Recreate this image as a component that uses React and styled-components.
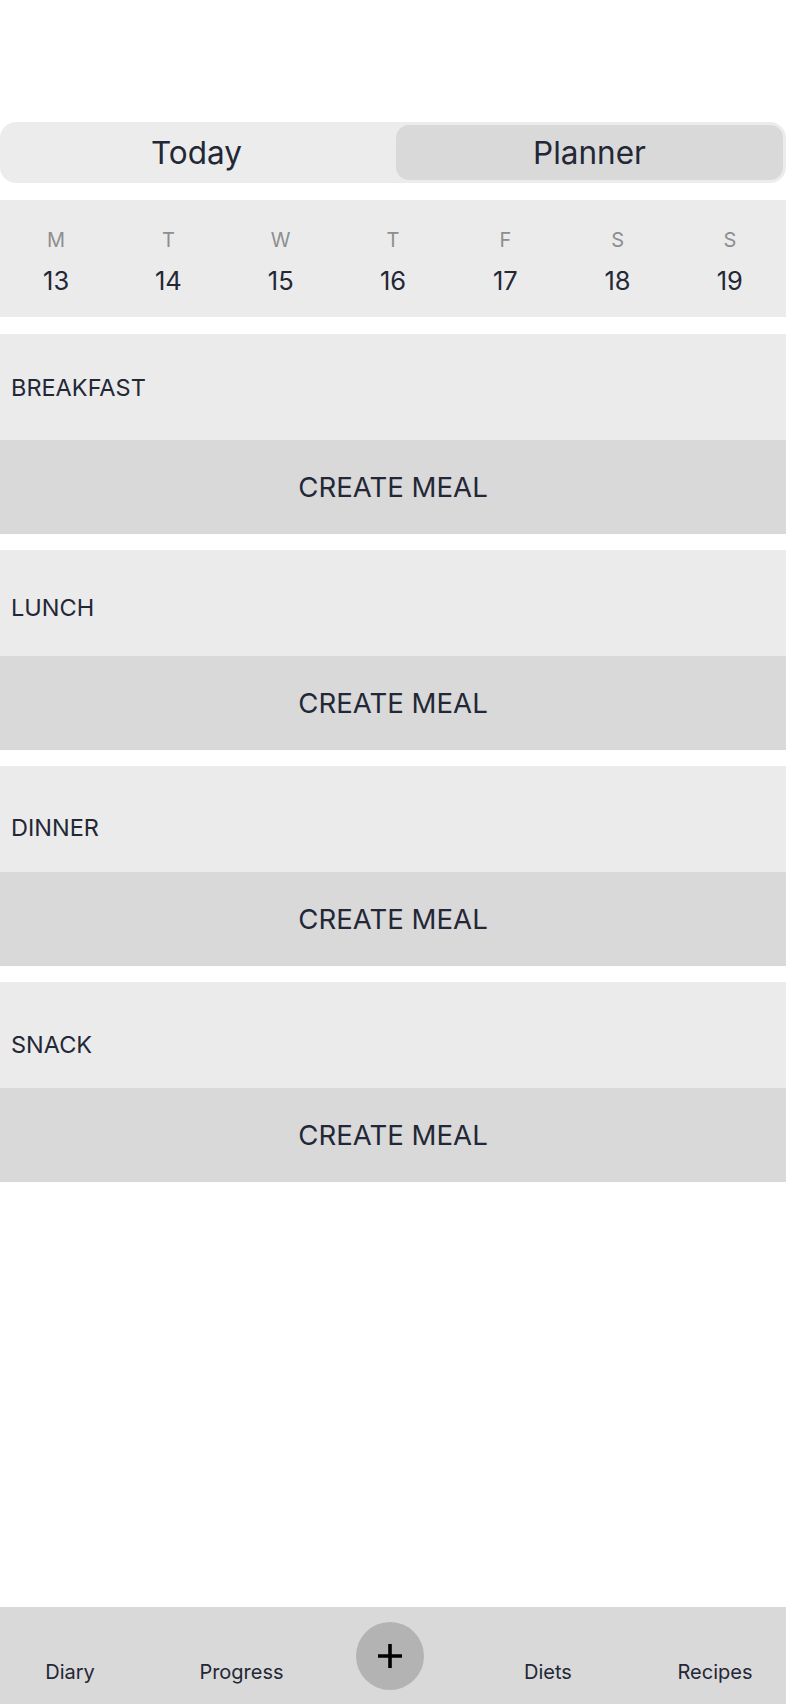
import React, { useState } from "react";
import styled, { createGlobalStyle } from "styled-components";

const GlobalStyle = createGlobalStyle`
  html, body {
    margin: 0;
    padding: 0;
    background: #ffffff;
  }
  body {
    font-family: Inter, "Noto Sans", "Liberation Sans", sans-serif;
    color: #232736;
  }
  * { box-sizing: border-box; }
`;

const Page = styled.div`
  min-height: 1704px;
  display: flex;
  flex-direction: column;
  padding-top: 122px;
`;

const Segmented = styled.div`
  display: grid;
  grid-template-columns: 1fr 1fr;
  gap: 6px;
  height: 61px;
  padding: 3px;
  background: #ececec;
  border-radius: 16px;
`;

const SegButton = styled.button`
  border: none;
  border-radius: 13px;
  background: ${(p) => (p.$active ? "#d9d9d9" : "transparent")};
  font-family: inherit;
  font-size: 31.5px;
  color: #232736;
  cursor: pointer;
  padding: 0;
`;

const Week = styled.div`
  margin-top: 17px;
  height: 117px;
  background: #ebebeb;
  display: grid;
  grid-template-columns: repeat(7, 1fr);
  padding: 28px 0 0;
`;

const Day = styled.div`
  display: flex;
  flex-direction: column;
  align-items: center;
  gap: 14px;
`;

const DayLetter = styled.span`
  font-size: 20px;
  line-height: 24px;
  color: #8e8e8e;
`;

const DayNum = styled.span`
  font-size: 25.5px;
  line-height: 30px;
  color: #232736;
`;

const Meals = styled.div`
  margin-top: 17px;
  display: flex;
  flex-direction: column;
  gap: 16px;
`;

const Meal = styled.section`
  display: flex;
  flex-direction: column;
`;

const MealHeader = styled.div`
  height: 106px;
  background: #ebebeb;
  display: flex;
  align-items: center;
  padding-left: 11px;
  padding-top: ${(p) => p.$offset * 2}px;
  font-size: 23.5px;
`;

const CreateButton = styled.button`
  height: 94px;
  border: none;
  background: #d9d9d9;
  font-family: inherit;
  font-size: 27.6px;
  color: #232736;
  cursor: pointer;
`;

const Nav = styled.nav`
  margin-top: auto;
  height: 97px;
  background: #d9d9d9;
  display: grid;
  grid-template-columns: 140px 203px 94px 222px 112px;
  align-items: center;
`;

const NavItem = styled.span`
  text-align: center;
  font-size: 20px;
  line-height: 24px;
  padding-top: 32px;
  color: #232736;
`;

const AddButton = styled.button`
  justify-self: center;
  width: 68px;
  height: 68px;
  border-radius: 50%;
  border: none;
  background: #b3b3b3;
  display: flex;
  align-items: center;
  justify-content: center;
  padding: 0;
  cursor: pointer;
`;

const days = [
  ["M", 13],
  ["T", 14],
  ["W", 15],
  ["T", 16],
  ["F", 17],
  ["S", 18],
  ["S", 19],
];

// label sits a little lower in each later section
const meals = [
  { name: "BREAKFAST", offset: 0 },
  { name: "LUNCH", offset: 4 },
  { name: "DINNER", offset: 8.5 },
  { name: "SNACK", offset: 9 },
];

const App = () => {
  const [tab, setTab] = useState("planner");

  return (
    <>
      <GlobalStyle />
      <Page>
        <Segmented>
          <SegButton $active={tab === "today"} onClick={() => setTab("today")}>
            Today
          </SegButton>
          <SegButton $active={tab === "planner"} onClick={() => setTab("planner")}>
            Planner
          </SegButton>
        </Segmented>

        <Week>
          {days.map(([letter, num]) => (
            <Day key={num}>
              <DayLetter>{letter}</DayLetter>
              <DayNum>{num}</DayNum>
            </Day>
          ))}
        </Week>

        <Meals>
          {meals.map((m) => (
            <Meal key={m.name}>
              <MealHeader $offset={m.offset}>{m.name}</MealHeader>
              <CreateButton>CREATE MEAL</CreateButton>
            </Meal>
          ))}
        </Meals>

        <Nav>
          <NavItem>Diary</NavItem>
          <NavItem>Progress</NavItem>
          <AddButton aria-label="add">
            <svg width="26" height="26" viewBox="0 0 26 26">
              <path d="M13 1v24M1 13h24" stroke="#000" strokeWidth="3.6" />
            </svg>
          </AddButton>
          <NavItem>Diets</NavItem>
          <NavItem>Recipes</NavItem>
        </Nav>
      </Page>
    </>
  );
};

export default App;
